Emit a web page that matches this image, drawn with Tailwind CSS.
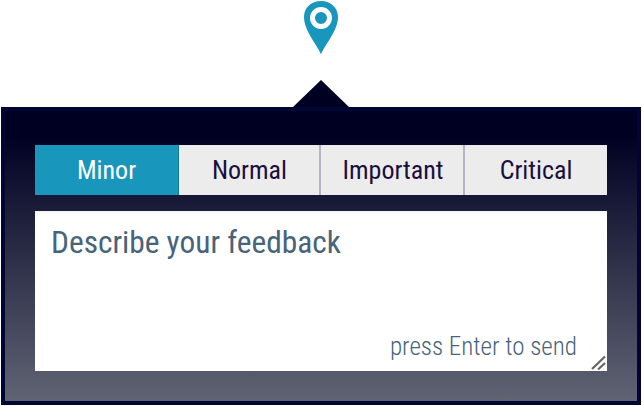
<!DOCTYPE html>
<html lang="en">
<head>
    <meta charset="UTF-8">
    <title>Feedback</title>
    <script src="https://cdn.jsdelivr.net/npm/@tailwindcss/browser@4"></script>
</head>
<body class="bg-white font-['Roboto',sans-serif] w-[642px] h-[406px] overflow-hidden">
    <!-- Pin and arrow -->
    <div class="relative h-[107px]">
        <svg class="absolute left-[304px] top-0" width="34" height="55" viewBox="0 0 34 55">
            <path fill="#1896bc" d="M17 54.5C14 46 0 31 0 17C0 7.5 7.5 1 17 1S34 7.5 34 17C34 31 20 46 17 54.5Z"/>
            <circle cx="17" cy="18" r="8.5" fill="none" stroke="#fff" stroke-width="5"/>
        </svg>
        <div class="absolute left-[293px] top-[80px] w-0 h-0 border-x-[28px] border-x-transparent border-b-[27px] border-b-[#000022]"></div>
    </div>
    <!-- Panel -->
    <div class="ml-px w-[640px] h-[298px] border-4 border-[#000533] bg-linear-to-b/srgb from-[#000022] from-[8%] to-[#606473] pt-[34px] px-[30px]">
        <div class="flex h-[50px] w-[572px] text-[26px] text-[#1a0f3c] bg-[#ececec]">
            <button class="w-[144px] bg-[#1896bc] text-white border-r border-[#137a9c] [font-stretch:75%]">Minor</button>
            <button class="w-[142px] pl-px border-r-2 border-[#b4b4c4] [font-stretch:75%]">Normal</button>
            <button class="w-[144px] pl-[2px] border-r-2 border-[#b4b4c4] [font-stretch:75%]">Important</button>
            <button class="w-[142px] [font-stretch:75%]">Critical</button>
        </div>
        <div class="relative mt-4 h-40 w-[572px] bg-white shadow-[inset_0_5px_4px_-3px_rgba(0,0,0,0.06)]">
            <div class="pl-4 pt-3 text-[31.4px] leading-[40px] text-[#46647a] [font-stretch:75%]">Describe your feedback</div>
            <div class="absolute right-[30px] bottom-[9px] text-[25px] leading-[30px] font-light text-[#46647a] [font-stretch:75%]">press Enter to send</div>
            <svg class="absolute right-0 bottom-0" width="16" height="16" viewBox="0 0 16 16">
                <path d="M1 14L14 1.5M7 14.5L14 8" stroke="#666" stroke-width="2.2" fill="none"/>
            </svg>
        </div>
    </div>
</body>
</html>
